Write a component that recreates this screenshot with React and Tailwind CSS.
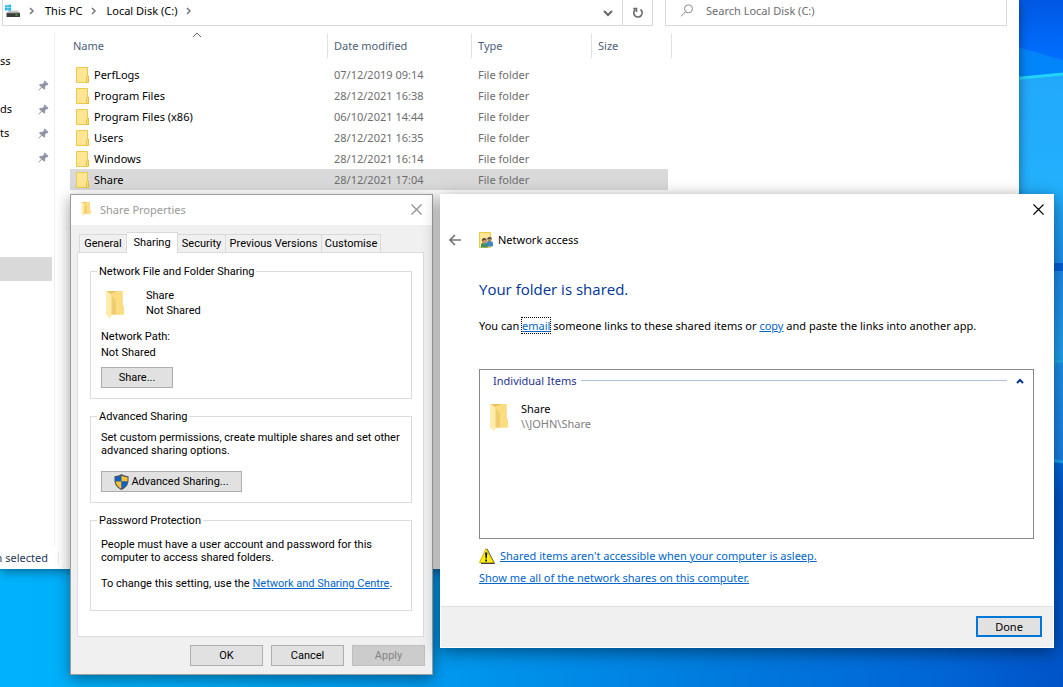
import React from "react";

function Wallpaper() {
  return (
    <svg
      className="absolute inset-0 h-full w-full"
      viewBox="0 0 1063 687"
      preserveAspectRatio="none"
      aria-hidden="true"
    >
      <defs>
        <linearGradient id="floor" x1="0" y1="0" x2="1" y2="0">
          <stop offset="0" stopColor="#00b2fb" />
          <stop offset="0.22" stopColor="#00a8f5" />
          <stop offset="0.42" stopColor="#0098ee" />
          <stop offset="0.7" stopColor="#0078dc" />
          <stop offset="0.88" stopColor="#0066d6" />
          <stop offset="1" stopColor="#0054c8" />
        </linearGradient>
        <linearGradient id="sky" x1="0" y1="0" x2="0" y2="1">
          <stop offset="0" stopColor="#0058e4" />
          <stop offset="0.6" stopColor="#006cfb" />
          <stop offset="1" stopColor="#0070fc" />
        </linearGradient>
        <linearGradient id="pane" x1="0" y1="0" x2="0" y2="1">
          <stop offset="0" stopColor="#22a8fb" />
          <stop offset="0.6" stopColor="#22b0fc" />
          <stop offset="1" stopColor="#1a90ee" />
        </linearGradient>
        <linearGradient id="lower" x1="0" y1="0" x2="0" y2="1">
          <stop offset="0" stopColor="#1c8cec" />
          <stop offset="0.45" stopColor="#20a0ee" />
          <stop offset="0.5" stopColor="#1c90ea" />
          <stop offset="1" stopColor="#1880e4" />
        </linearGradient>
        <linearGradient id="base" x1="0" y1="0" x2="0" y2="1">
          <stop offset="0" stopColor="#0068dc" />
          <stop offset="0.3" stopColor="#0054c8" />
          <stop offset="1" stopColor="#0058ca" />
        </linearGradient>
      </defs>
      <rect width="1063" height="687" fill="url(#floor)" />
      <rect x="1000" width="63" height="82" fill="url(#sky)" />
      <path d="M1000 42 L1063 60 V76 L1000 82Z" fill="#0284fb" />
      <path d="M1000 80 L1063 74 V264 H1000Z" fill="url(#pane)" />
      <path d="M1000 80 L1063 74" stroke="#22d4fc" strokeWidth="3" />
      <path d="M1040 263H1063V271H1040Z" fill="#0060da" />
      <path d="M1040 271H1063V463L1040 459Z" fill="url(#lower)" />
      <path d="M1040 363L1063 361" stroke="#1eb0e8" strokeWidth="2" />
      <path d="M1040 459L1063 463V600H1040Z" fill="url(#base)" />
      <path d="M1040 458L1063 462" stroke="#18a4f0" strokeWidth="3" />
    </svg>
  );
}

function FolderSmall() {
  return (
    <svg width="13" height="16" viewBox="0 0 13 16" className="shrink-0" aria-hidden="true">
      <path d="M.5.5h11v9h1v6H.5z" fill="#ffe694" stroke="#edc949" />
      <path d="M10.5 15.5v-5l1-1.500h1v6.500z" fill="#fbdf80" stroke="#e8c040" />
    </svg>
  );
}

function FolderOpen({ className }) {
  return (
    <svg viewBox="0 0 20 28" className={className} aria-hidden="true">
      <path d="M1 0H17.500V14L19 16V23H17.500V23.500H6V4Z" fill="#f8d775" />
      <path d="M2 0H17.500V14L19 16.500V23.500H6V3Z" fill="#fbdc80" />
      <path d="M6 3 12 0H2z" fill="#e9c364" />
      <path d="M6 4v19.500h5V9z" fill="#e9c468" opacity=".7" />
      <path d="M1 0 6.500 4.500V24.500L5.500 27.500 1 23.500Z" fill="#ffebac" />
    </svg>
  );
}

function DriveIcon() {
  return (
    <svg width="16" height="14" viewBox="0 0 16 14" className="shrink-0" aria-hidden="true">
      <path d="M0 1.500 2.700 1V3.500H0zM3.200.9 6 .4V3.500H3.200zM0 4H2.700V6.600L0 6.200zM3.200 4H6V7.100L3.200 6.700z" fill="#15b4f4" />
      <path d="M4 6.500H13L14.500 9H2z" fill="#c8c8c8" />
      <path d="M1.500 9H15V13H1.500z" fill="#3c3c3c" />
      <path d="M1.500 8.500H15V9.300H1.500z" fill="#8a8a8a" />
      <path d="M10.500 10.500h2v1h-2z" fill="#38f038" />
    </svg>
  );
}

function Pin() {
  return (
    <svg width="11" height="11" viewBox="0 0 11 11" aria-hidden="true">
      <path d="M6.500.5 10.500 4 9.500 5.200 8.700 4.900 7 6.800 7 9 6 9.800 3.900 7.600 1 10.600.4 10.700.5 10 3.200 7 1 4.900 2 4 4.200 4.100 6.300 2.300 5.800 1.400Z" fill="#8c97a3" />
    </svg>
  );
}

function Chevron({ d, className }) {
  return (
    <svg width="10" height="10" viewBox="0 0 10 10" className={className} fill="none" stroke="currentColor" aria-hidden="true">
      <path d={d} />
    </svg>
  );
}

function CloseIcon() {
  return (
    <svg width="11" height="11" viewBox="0 0 11 11" fill="none" stroke="currentColor" aria-hidden="true">
      <path d="M.5.5 10.500 10.500M10.500.5.5 10.500" strokeWidth="1.100" />
    </svg>
  );
}

function Shield() {
  return (
    <svg width="15" height="16" viewBox="0 0 15 16" aria-hidden="true">
      <path d="M7.500 0C9.500 1.500 12 2 14.500 2.200V6.500C14.500 11 11.500 14 7.500 16 3.500 14 .5 11 .5 6.500V2.200C3 2 5.500 1.500 7.500 0Z" fill="#4a4f55" />
      <path d="M7.500 1.400V7.500H1.500V3.200C4 3 6 2.400 7.500 1.400Z" fill="#0a64c8" />
      <path d="M7.500 1.400C9 2.400 11 3 13.500 3.200V7.500H7.500Z" fill="#ffc12e" />
      <path d="M1.600 7.500H7.500V14.800C4.200 13.100 2 10.800 1.600 7.500Z" fill="#ffc12e" />
      <path d="M13.400 7.500H7.500V14.800C10.800 13.100 13 10.800 13.400 7.500Z" fill="#0a64c8" />
    </svg>
  );
}

function PeopleFolder() {
  return (
    <svg width="15" height="16" viewBox="0 0 15 16" aria-hidden="true">
      <path d="M.5.5h11v15H.5z" fill="#ffe694" stroke="#edc949" />
      <path d="M7.500 14.500V11c0-1.500 1-2 3-2s3.500.8 3.500 2.500v3z" fill="#3c86c8" />
      <circle cx="10.500" cy="7.500" r="2.100" fill="#b98058" />
      <path d="M8.200 7.300c0-3 5-3 4.800.2l-1-1z" fill="#3e4a50" />
      <path d="M2 15.500V13c0-1.700 1.500-2.200 3.300-2.200S8.800 11.500 8.800 13.300v2.200z" fill="#3e9068" />
      <circle cx="5.300" cy="9.200" r="2.200" fill="#c89468" />
      <path d="M2.800 9c0-4 5.300-3.800 5 .2l-1.300-1.600z" fill="#4a4438" />
    </svg>
  );
}

function Warning() {
  return (
    <svg width="16" height="16" viewBox="0 0 16 16" className="shrink-0" aria-hidden="true">
      <path d="M8 1 15.500 15.500H2" fill="none" stroke="#3c3c50" />
      <path d="M7 .5 14.500 14.500H.5z" fill="#fff200" stroke="#c8a800" strokeWidth=".9" strokeLinejoin="round" />
      <path d="M6 4.500h2.300L7.800 10.500H6.500zM6.200 11.500h1.800v1.900H6.200z" fill="#111" />
    </svg>
  );
}

const files = [
  ["PerfLogs", "07/12/2019 09:14"],
  ["Program Files", "28/12/2021 16:38"],
  ["Program Files (x86)", "06/10/2021 14:44"],
  ["Users", "28/12/2021 16:35"],
  ["Windows", "28/12/2021 16:14"],
  ["Share", "28/12/2021 17:04"],
];

const quickAccess = ["", "ds", "ts", ""];

function HeaderCell({ children, className }) {
  return (
    <th scope="col" className={`h-[31px] p-0 text-left align-top font-normal ${className}`}>
      <div className="flex h-[25px] items-center border-r border-[#e2e2e2]">{children}</div>
    </th>
  );
}

function Explorer() {
  return (
    <section
      aria-label="Local Disk (C:)"
      className="relative mr-11 overflow-hidden bg-white shadow-[0_2px_10px_rgba(0,0,0,0.45)]"
    >
      <div className="flex h-[26px] gap-3 pr-3 pl-[2px]">
        <div className="flex min-w-0 flex-1 border-x border-b border-[#d9d9d9]">
          <nav aria-label="Address" className="flex flex-1 items-center gap-[7px] pb-1 pl-[2px] text-black">
            <DriveIcon />
            <Chevron d="M2 2 5 5 2 8" className="stroke-[1.500] text-[#777]" />
            <button type="button">This PC</button>
            <Chevron d="M2 2 5 5 2 8" className="stroke-[1.500] text-[#777]" />
            <button type="button">Local Disk (C:)</button>
            <Chevron d="M3 2 6 5 3 8" className="stroke-[1.500] text-[#777]" />
          </nav>
          <button type="button" aria-label="Previous locations" className="flex w-[29px] items-center justify-center text-[#666]">
            <Chevron d="M1 3 5 7 9 3" className="stroke-2" />
          </button>
          <button type="button" aria-label="Refresh" className="flex w-[30px] items-center justify-center border-l border-[#d9d9d9] text-[#6b6b6b]">
            <svg width="12" height="12" viewBox="0 0 12 12" fill="none" stroke="currentColor" strokeWidth="1.600" aria-hidden="true">
              <path d="M8.500 2.500A4.200 4.200 0 1 1 3.200 2.700M1.200 1.500H4.500V5" />
            </svg>
          </button>
        </div>
        <label className="flex w-[342px] items-center gap-3 border-x border-b border-[#d9d9d9] pb-1 pl-[14px]">
          <svg width="14" height="13" viewBox="0 0 14 13" fill="none" stroke="#8d8591" aria-hidden="true">
            <circle cx="8.500" cy="4.800" r="4" />
            <path d="M5.500 7.800 1 12.300" />
          </svg>
          <input
            type="search"
            aria-label="Search Local Disk (C:)"
            placeholder="Search Local Disk (C:)"
            className="min-w-0 flex-1 bg-transparent outline-none placeholder:text-[#6d6d6d]"
          />
        </label>
      </div>

      <div className="flex min-h-[520px] pt-[7px]">
        <nav aria-label="Quick access" className="w-[55px] shrink-0 border-r border-[#f0f0f0] pt-4 text-black">
          <div className="flex h-6 items-center">ss</div>
          {quickAccess.map((tail, i) => (
            <div key={i} className="flex h-6 items-center justify-between pr-[5px]">
              <span>{tail}</span>
              <Pin />
            </div>
          ))}
          <div className="mt-[88px] mr-[2px] h-6 bg-[#d9d9d9]" />
        </nav>
        <div className="pl-[15px]">
          <table className="w-[602px] table-fixed border-collapse">
            <thead className="text-[#4c607a]">
              <tr>
                <HeaderCell className="w-[258px]">
                  <span className="relative w-full pl-[3px]">
                    Name
                    <Chevron d="M1 7 5 3 9 7" className="absolute -top-2 left-[122px] text-[#666]" />
                  </span>
                </HeaderCell>
                <HeaderCell className="w-[144px]"><span className="pl-[6px]">Date modified</span></HeaderCell>
                <HeaderCell className="w-[120px]"><span className="pl-[6px]">Type</span></HeaderCell>
                <HeaderCell className="w-[80px]"><span className="pl-[6px]">Size</span></HeaderCell>
              </tr>
            </thead>
            <tbody className="text-[#6d6d6d]">
              {files.map(([name, date]) => {
                const bg = name === "Share" ? "bg-[#d9d9d9]" : "";
                return (
                  <tr key={name} className="h-[21px]">
                    <td className={`p-0 ${bg}`}>
                      <div className="flex items-center gap-[5px] pl-[6px] text-black">
                        <FolderSmall />
                        {name}
                      </div>
                    </td>
                    <td className={`p-0 pl-[6px] ${bg}`}>{date}</td>
                    <td className={`p-0 pl-[6px] ${bg}`}>File folder</td>
                    <td className="p-0"><div className={`mr-1 h-[21px] ${bg}`} /></td>
                  </tr>
                );
              })}
            </tbody>
          </table>
        </div>
      </div>

      <footer className="flex h-[23px] items-center text-[#1e395b]">
        <span className="flex w-12 justify-end whitespace-nowrap">n selected</span>
        <span className="ml-[10px] h-3 w-px bg-[#eaeaea]" />
      </footer>
    </section>
  );
}

const tabs = [
  ["General", "w-12"],
  ["Sharing", "w-[51px]"],
  ["Security", "w-12"],
  ["Previous Versions", "w-24"],
  ["Customise", "w-[59px]"],
];

function Group({ title, children, className }) {
  return (
    <fieldset className={`min-w-0 border border-[#dcdcdc] px-[10px] ${className}`}>
      <legend className="-ml-1 h-[13px] px-[2px] leading-[13px]">{title}</legend>
      {children}
    </fieldset>
  );
}

function ClassicButton({ children, className = "", disabled }) {
  return (
    <button
      type="button"
      disabled={disabled}
      className={`flex h-[21px] items-center justify-center border border-[#adadad] bg-[#e1e1e1] disabled:border-[#bfbfbf] disabled:bg-[#cccccc] disabled:text-[#838383] ${className}`}
    >
      {children}
    </button>
  );
}

function Properties() {
  return (
    <section
      role="dialog"
      aria-label="Share Properties"
      className="absolute top-[194px] left-[70px] w-[363px] border border-[#9c9c9c] bg-[#f0f0f0] font-[Roboto,sans-serif] text-[11px] leading-[13px] text-black shadow-[0_4px_14px_rgba(0,0,0,0.4)]"
    >
      <header className="flex h-[30px] items-center bg-white pr-[10px] pb-[2px] pl-[10px] font-['Noto_Sans',sans-serif] text-[#999]">
        <FolderOpen className="h-[14px] w-[10px]" />
        <h2 className="ml-[9px] flex-1">Share Properties</h2>
        <button type="button" aria-label="Close" className="text-[#8a8a8a]"><CloseIcon /></button>
      </header>
      <div className="pt-[7px] pr-2 pb-2 pl-[6px]">
        <div role="tablist" className="flex h-5 items-end pl-[2px]">
          {tabs.map(([name, width], i) => (
            <button
              key={name}
              type="button"
              role="tab"
              aria-selected={i === 1}
              className={`border-t border-r border-[#d9d9d9] whitespace-nowrap ${width} ${i === 0 ? "border-l" : ""} ${i === 1 ? "h-5 bg-white pb-px" : "h-[18px] bg-[#f0f0f0]"}`}
            >
              {name}
            </button>
          ))}
        </div>
        <div role="tabpanel" className="relative flex flex-col gap-[11px] border border-[#dcdcdc] bg-white pt-3 pr-[11px] pb-[25px] pl-3">
          <span className="absolute -top-px left-[49px] h-px w-[50px] bg-white" />
          <Group title="Network File and Folder Sharing" className="pb-[10px]">
            <div className="flex pt-[10px] pl-1">
              <FolderOpen className="mt-[3px] h-7 w-5" />
              <p className="ml-[21px] leading-[15px]">Share<br />Not Shared</p>
            </div>
            <p className="mt-[10px] leading-4">Network Path:<br />Not Shared</p>
            <ClassicButton className="mt-[6px] w-[72px]">Share...</ClassicButton>
          </Group>
          <Group title="Advanced Sharing" className="pb-[10px]">
            <p className="pt-2">
              Set custom permissions, create multiple shares and set other advanced sharing options.
            </p>
            <ClassicButton className="mt-[14px] w-[141px] gap-[2px]"><Shield />Advanced Sharing...</ClassicButton>
          </Group>
          <Group title="Password Protection" className="pb-5">
            <p className="pt-[11px]">
              People must have a user account and password for this<br />computer to access shared folders.
            </p>
            <p className="mt-[13px]">
              To change this setting, use the{" "}
              <a href="#sharing-centre" className="text-[#0066cc] underline">Network and Sharing Centre</a>.
            </p>
          </Group>
        </div>
        <div className="mt-2 -mr-px flex justify-end gap-2">
          <ClassicButton className="w-[73px]">OK</ClassicButton>
          <ClassicButton className="w-[73px]">Cancel</ClassicButton>
          <ClassicButton className="w-[73px]" disabled>Apply</ClassicButton>
        </div>
      </div>
    </section>
  );
}

function NetworkAccess() {
  const link = "text-[#0066cc] underline";
  return (
    <section
      role="dialog"
      aria-label="Network access"
      className="absolute top-[194px] right-[9px] left-[440px] border border-white bg-white text-black shadow-[0_4px_16px_rgba(0,0,0,0.45)]"
    >
      <div className="flex h-[29px] items-center justify-end pr-[9px]">
        <button type="button" aria-label="Close"><CloseIcon /></button>
      </div>
      <header className="mt-[7px] flex h-[18px] items-center pl-2">
        <button type="button" aria-label="Back" className="text-[#757575]">
          <svg width="12" height="12" viewBox="0 0 12 12" fill="none" stroke="currentColor" strokeWidth="1.700" aria-hidden="true">
            <path d="M12 6H1M6 1 1 6 6 11" />
          </svg>
        </button>
        <span className="ml-[18px]"><PeopleFolder /></span>
        <h2 className="ml-1">Network access</h2>
      </header>
      <div className="pr-[19px] pl-[38px]">
        <h1 className="mt-[30px] font-['Open_Sans',sans-serif] text-[15px] leading-5 text-[#003399]">Your folder is shared.</h1>
        <p className="mt-[19px] leading-4">
          You can <a href="#email" className={`${link} outline-1 outline-dotted outline-black`}>email</a> someone links to
          these shared items or <a href="#copy" className={link}>copy</a> and paste the links into another app.
        </p>
        <div className="mt-[35px] min-h-[170px] border border-[#828790]">
          <div className="flex h-[21px] items-center gap-[5px] pr-2 pl-[13px] text-[#1f3395]">
            <h3>Individual Items</h3>
            <span className="h-px flex-1 bg-[#b0bfe0]" />
            <button type="button" aria-label="Collapse group" className="flex w-[13px] justify-end text-[#003399]">
              <Chevron d="M2 7 5 4 8 7" className="stroke-2" />
            </button>
          </div>
          <div className="mt-[10px] flex pl-[9px]">
            <FolderOpen className="mt-[3px] h-7 w-5" />
            <p className="ml-[12px] leading-[15px]">Share<br /><span className="text-[#808080]">\\JOHN\Share</span></p>
          </div>
        </div>
        <p className="mt-[9px] flex h-4 items-center gap-[5px]">
          <Warning />
          <a href="#asleep" className={link}>Shared items aren't accessible when your computer is asleep.</a>
        </p>
        <p className="mt-[6px] h-4 leading-4"><a href="#shares" className={link}>Show me all of the network shares on this computer.</a></p>
      </div>
      <footer className="mt-5 flex justify-end border-t border-[#dfdfdf] bg-[#f0f0f0] px-[11px] py-[9px] pb-[10px]">
        <button type="button" className="h-[21px] w-[66px] border-2 border-[#0078d7] bg-[#e1e1e1] leading-4">Done</button>
      </footer>
    </section>
  );
}

export default function App() {
  return (
    <main className="relative min-h-screen overflow-hidden bg-[#0098ee] font-['Noto_Sans',sans-serif] text-[11px] leading-4">
      <Wallpaper />
      <Explorer />
      <Properties />
      <NetworkAccess />
    </main>
  );
}
